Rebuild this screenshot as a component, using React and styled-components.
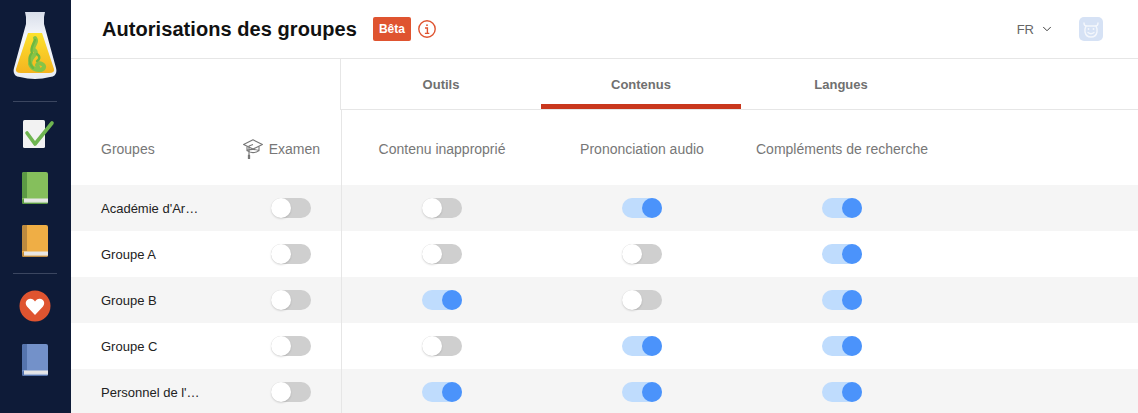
import React from 'react';
import styled, { createGlobalStyle } from 'styled-components';
import { ChevronDown } from 'lucide-react';

const GlobalStyle = createGlobalStyle`
  html, body {
    margin: 0;
    height: 100%;
    overflow: hidden;
    background: #fff;
    font-family: "Liberation Sans", Arial, sans-serif;
  }
`;

const Page = styled.div`
  display: flex;
  width: 1138px;
  height: 413px;
  overflow: hidden;
`;

const Sidebar = styled.nav`
  flex: 0 0 71px;
  display: flex;
  flex-direction: column;
  align-items: center;
  padding: 12px 1px 0 0;
  box-sizing: border-box;
  background: #0e1b38;
`;

const NavDivider = styled.div`
  flex: none;
  width: 44px;
  height: 1px;
  margin: ${(p) => p.$margin};
  background: #3b4660;
`;

const NavIcon = styled.div`
  display: flex;
  justify-content: center;
  margin-bottom: ${(p) => p.$gap || 0}px;
`;

const Main = styled.main`
  flex: 1;
  min-width: 0;
`;

const Header = styled.header`
  display: flex;
  align-items: center;
  height: 58px;
  padding: 0 35px 0 31px;
  border-bottom: 1px solid #e6e6e6;
`;

const Title = styled.h1`
  margin: 0;
  font-size: 20px;
  font-weight: 700;
  letter-spacing: 0.06px;
  color: #111;
`;

const BetaBadge = styled.span`
  margin-left: 16px;
  padding: 0 6px;
  height: 24px;
  line-height: 24px;
  border-radius: 2px;
  background: #df5430;
  color: #fff;
  font-size: 12px;
  font-weight: 700;
`;

const InfoButton = styled.span`
  display: flex;
  margin-left: 7px;
`;

const LangSelect = styled.div`
  display: flex;
  align-items: center;
  gap: 6px;
  margin-left: auto;
  font-size: 13px;
  color: #666;
`;

const Avatar = styled.div`
  display: flex;
  margin-left: 25px;
`;

const TabsRow = styled.div`
  display: grid;
  grid-template-columns: 270px repeat(3, 200px) 1fr;
  height: 51px;
`;

const TableRow = styled.div`
  display: grid;
  grid-template-columns: 271px repeat(3, 200px) 1fr;
  height: ${(p) => p.$height}px;
  background: ${(p) => (p.$striped ? '#f5f5f5' : 'transparent')};
`;

const TabsOffset = styled.div`
  border-right: 1px solid #e6e6e6;
`;

const Tab = styled.div`
  display: flex;
  align-items: center;
  justify-content: center;
  border-bottom: 1px solid #e6e6e6;
  box-shadow: ${(p) => (p.$active ? 'inset 0 -5px 0 #c9371d' : 'none')};
  font-size: 13px;
  font-weight: 700;
  color: #707070;
`;

const TabsFill = styled.div`
  border-bottom: 1px solid #e6e6e6;
`;

const GroupHead = styled.div`
  display: flex;
  align-items: center;
  justify-content: space-between;
  padding: 2px 21px 0 30px;
  border-right: 1px solid #e6e6e6;
  font-size: 14px;
  color: #777;
`;

const ExamLabel = styled.span`
  display: flex;
  align-items: center;
  gap: 6px;
`;

const ColumnHead = styled.div`
  display: flex;
  align-items: center;
  justify-content: center;
  padding-top: 2px;
  font-size: 14px;
  color: #777;
`;

const GroupCell = styled.div`
  display: flex;
  align-items: center;
  justify-content: space-between;
  padding: 0 30px;
  border-right: 1px solid #e6e6e6;
  font-size: 13px;
  color: #222;
`;

const GroupName = styled.span`
  white-space: nowrap;
`;

const ToggleCell = styled.div`
  display: flex;
  align-items: center;
  justify-content: center;
`;

const Track = styled.span`
  position: relative;
  display: block;
  width: 40px;
  height: 20px;
  border-radius: 10px;
  background: ${(p) => (p.$on ? '#bfdcfd' : '#cfcfcf')};
`;

const Knob = styled.span`
  position: absolute;
  top: 0;
  left: ${(p) => (p.$on ? '20px' : '0')};
  width: 20px;
  height: 20px;
  border-radius: 50%;
  background: ${(p) => (p.$on ? '#4b93fb' : '#fff')};
  box-shadow: ${(p) => (p.$on ? 'none' : '0 1px 2px rgba(0, 0, 0, 0.15)')};
`;

const Toggle = ({ on }) => (
  <Track $on={on}>
    <Knob $on={on} />
  </Track>
);

const Flask = () => (
  <svg width="44" height="68" viewBox="0 0 44 68">
    <defs>
      <linearGradient id="liquid" x1="0" y1="0" x2="0" y2="1">
        <stop offset="0" stopColor="#fde22e" />
        <stop offset="1" stopColor="#f4b41f" />
      </linearGradient>
      <linearGradient id="glass" x1="0" y1="0" x2="0" y2="1">
        <stop offset="0" stopColor="#d8deea" />
        <stop offset="0.35" stopColor="#f4f6fa" />
        <stop offset="1" stopColor="#e9edf3" />
      </linearGradient>
    </defs>
    <path
      d="M12 0 H32 L31 5 V12 L43 56 Q45 64 37 65 Q22 69 7 65 Q-1 64 1 56 L13 12 V5 Z"
      fill="url(#glass)"
    />
    <path d="M15 21 H29 L41 57 Q42 61 36 61 H8 Q2 61 3 57 Z" fill="url(#liquid)" />
    <g fill="none" strokeLinecap="round" strokeLinejoin="round">
      <path
        d="M22 26 C26 31 18 34 21 38 C26 41 19 44 18 48 C15 53 20 58 26 58 C31 58 33 54 29 52 C25 50 23 53 25 55"
        stroke="#86c448"
        strokeWidth="4"
      />
      <path
        d="M22 28 C20 33 17 36 19 41 C15 45 16 52 20 56 M24 42 C28 45 26 48 24 49"
        stroke="#6cb840"
        strokeWidth="2.4"
      />
    </g>
  </svg>
);

const TaskIcon = () => (
  <svg width="44" height="28" viewBox="0 0 44 28">
    <rect x="10" y="0" width="22" height="28" rx="1.5" fill="#f2f2f2" />
    <path d="M14 13 L22 24 L39 3" fill="none" stroke="#6fb550" strokeWidth="3.6" strokeLinecap="round" strokeLinejoin="round" />
  </svg>
);

const Book = ({ cover, spine }) => (
  <svg width="26" height="32" viewBox="0 0 26 32">
    <rect x="0" y="0" width="26" height="32" rx="2" fill={cover} />
    <path d="M2 0 H5 V26 H0 V2 Q0 0 2 0 Z" fill={spine} />
    <path d="M1.5 32 Q0 32 0 30 Q0 27 2 27 H26 V30 Q26 32 24 32 Z" fill={spine} />
    <rect x="2" y="26.5" width="24" height="3.2" fill="#e6e6e6" />
    <rect x="2" y="29.5" width="24" height="1" fill="#fff" />
  </svg>
);

const HeartBadge = () => (
  <svg width="32" height="32" viewBox="0 0 32 32">
    <circle cx="16" cy="16" r="15.5" fill="#df5430" />
    <path d="M16 25 L8 16.5 C5 12.5 8 8.5 11.5 8.8 C13.5 9 15 10 16 11.5 C17 10 18.5 9 20.5 8.8 C24 8.5 27 12.5 24 16.5 Z" fill="#fff" />
  </svg>
);

const InfoIcon = () => (
  <svg width="18" height="18" viewBox="0 0 18 18" fill="none" stroke="#df5430" strokeWidth="1.4">
    <circle cx="9" cy="9" r="8.2" />
    <path d="M7 8 H9.4 V13.4 M6.9 13.4 H11.3" />
    <circle cx="9" cy="5.2" r="0.9" fill="#df5430" stroke="none" />
  </svg>
);

const CowAvatar = () => (
  <svg width="24" height="24" viewBox="0 0 24 24">
    <rect width="24" height="24" rx="5" fill="#d6e2f5" />
    <g fill="none" stroke="#f4f7fc" strokeWidth="1.4" strokeLinecap="round">
      <path d="M5 6 Q5 9 7.5 9 H16.5 Q19 9 19 6" />
      <path d="M7 9 Q5.5 12 6 15 Q7 20 12 20 Q17 20 18 15 Q18.5 12 17 9" />
      <path d="M9 15.5 Q12 18 15 15.5" />
    </g>
    <circle cx="9.5" cy="12" r="0.9" fill="#f4f7fc" />
    <circle cx="14.5" cy="12" r="0.9" fill="#f4f7fc" />
  </svg>
);

const CapIcon = () => (
  <svg width="20" height="20" viewBox="0 0 20 20" fill="none" stroke="#777" strokeWidth="1.1" strokeLinejoin="round">
    <path d="M10 0.8 L19.4 5.6 L10 10 L0.6 5.6 Z" />
    <path d="M4 7.4 V11.6 Q10 9.2 16 11.6 V7.4" />
    <path d="M4 11.6 Q10 15.6 16 11.6" />
    <path d="M10 5.6 L6 7 V17" />
    <path d="M5.4 16.4 H6.6 V19.4 H5.4 Z" fill="#777" />
  </svg>
);

const groups = [
  { name: "Académie d'Ar…", exam: false, values: [false, true, true] },
  { name: 'Groupe A', exam: false, values: [false, false, true] },
  { name: 'Groupe B', exam: false, values: [true, false, true] },
  { name: 'Groupe C', exam: false, values: [false, true, true] },
  { name: "Personnel de l'…", exam: false, values: [true, true, true] },
];

const columns = ['Contenu inapproprié', 'Prononciation audio', 'Compléments de recherche'];
const tabs = ['Outils', 'Contenus', 'Langues'];

const App = () => (
  <Page>
    <GlobalStyle />
    <Sidebar>
      <NavIcon>
        <Flask />
      </NavIcon>
      <NavDivider $margin="21px 0 18px" />
      <NavIcon $gap={24}>
        <TaskIcon />
      </NavIcon>
      <NavIcon $gap={21}>
        <Book cover="#85bf5c" spine="#5c9a44" />
      </NavIcon>
      <NavIcon>
        <Book cover="#efae45" spine="#bd8a3e" />
      </NavIcon>
      <NavDivider $margin="16px 0 16px" />
      <NavIcon $gap={22}>
        <HeartBadge />
      </NavIcon>
      <NavIcon>
        <Book cover="#7391c9" spine="#5574ad" />
      </NavIcon>
    </Sidebar>
    <Main>
      <Header>
        <Title>Autorisations des groupes</Title>
        <BetaBadge>Bêta</BetaBadge>
        <InfoButton>
          <InfoIcon />
        </InfoButton>
        <LangSelect>
          FR
          <ChevronDown size={14} color="#333" strokeWidth={1.6} />
        </LangSelect>
        <Avatar>
          <CowAvatar />
        </Avatar>
      </Header>
      <TabsRow>
        <TabsOffset />
        {tabs.map((tab) => (
          <Tab key={tab} $active={tab === 'Contenus'}>
            {tab}
          </Tab>
        ))}
        <TabsFill />
      </TabsRow>
      <TableRow $height={75}>
        <GroupHead>
          Groupes
          <ExamLabel>
            <CapIcon />
            Examen
          </ExamLabel>
        </GroupHead>
        {columns.map((col) => (
          <ColumnHead key={col}>{col}</ColumnHead>
        ))}
      </TableRow>
      {groups.map((group, i) => (
        <TableRow key={group.name} $height={46} $striped={i % 2 === 0}>
          <GroupCell>
            <GroupName>{group.name}</GroupName>
            <Toggle on={group.exam} />
          </GroupCell>
          {group.values.map((on, j) => (
            <ToggleCell key={columns[j]}>
              <Toggle on={on} />
            </ToggleCell>
          ))}
        </TableRow>
      ))}
    </Main>
  </Page>
);

export default App;
